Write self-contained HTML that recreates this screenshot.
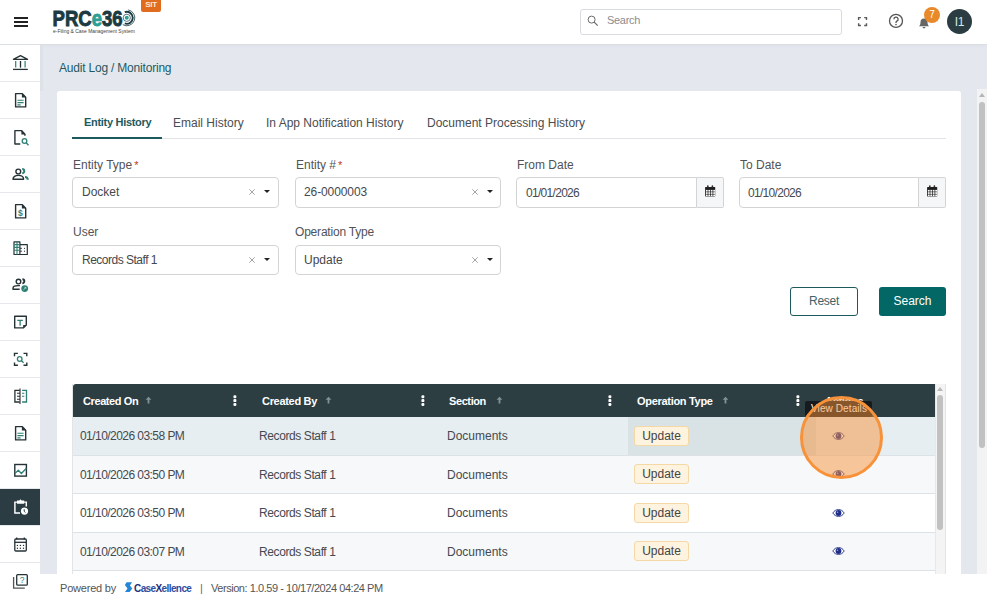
<!DOCTYPE html>
<html><head><meta charset="utf-8">
<style>
*{box-sizing:border-box;margin:0;padding:0}
html,body{width:987px;height:599px;overflow:hidden}
body{position:relative;background:#e4e8ee;font-family:"Liberation Sans",sans-serif;color:#3a3f44;font-size:12px}
.abs{position:absolute}
.t{position:absolute;white-space:nowrap;line-height:1}
/* header */
#hdr{left:0;top:0;width:987px;height:45px;background:#fff;border-bottom:1px solid #dcdfe2;box-shadow:0 1px 3px rgba(0,0,0,.03)}
#side{left:0;top:45px;width:40px;height:554px;background:#fff}
.sitem{position:absolute;left:0;width:40px;height:37px;border-bottom:1px solid #e3e6ea}
.sitem svg{position:absolute;left:12px;top:10px}
#card{left:57px;top:91px;width:904px;height:500px;background:#fff;border-radius:3px}
#footer{left:40px;top:574px;width:947px;height:25px;background:#fff}
.lbl{font-size:12px;color:#505357}
.sel{position:absolute;height:31px;border:1px solid #d4d4d4;border-radius:4px;background:#fff}
.sel .v{position:absolute;left:9px;top:8px;font-size:12px;color:#45484c;white-space:nowrap;line-height:12px}
.sel .x{position:absolute;top:11px;width:6px;height:6px}
.sel .ar{position:absolute;top:12px;width:0;height:0;border-left:3px solid transparent;border-right:3px solid transparent;border-top:3px solid #222}
.inp{position:absolute;height:31px;border:1px solid #d4d4d4;border-radius:4px 0 0 4px;background:#fff}
.addon{position:absolute;height:31px;border:1px solid #d4d4d4;border-left:none;border-radius:0 2px 2px 0;background:#f5f6f8}
.th{position:absolute;top:396px;font-size:11px;font-weight:bold;color:#fff;white-space:nowrap;line-height:11px}
.kb{position:absolute;top:395px;width:3px;height:11px}
.kb i{position:absolute;left:0;width:3px;height:3px;border-radius:50%;background:#fff}
.row{position:absolute;left:73px;width:862px;border-bottom:1px solid #dde2e6}
.td{position:absolute;font-size:12px;color:#454950;white-space:nowrap;line-height:12px}
.badge{position:absolute;left:634px;width:55px;height:20px;background:#fdf3de;border:1px solid #f4d9a6;border-radius:3px;font-size:12px;color:#444;text-align:center;line-height:18px}
</style></head><body>

<div id="hdr" class="abs"></div>
<!-- hamburger -->
<div class="abs" style="left:14px;top:17px;width:14px;height:2px;background:#222"></div>
<div class="abs" style="left:14px;top:21px;width:14px;height:2px;background:#222"></div>
<div class="abs" style="left:14px;top:25px;width:14px;height:2px;background:#222"></div>

<!-- logo -->
<svg class="abs" style="left:50px;top:4px" width="90" height="32" viewBox="0 0 90 32">
<text x="2.6" y="21.8" font-family="Liberation Sans" font-weight="bold" font-size="22" fill="#1b3a42" stroke="#1b3a42" stroke-width=".9" textLength="70" lengthAdjust="spacingAndGlyphs">PRC<tspan fill="#2d9f94" stroke="#2d9f94">e</tspan>36</text>
<text x="3" y="28.6" font-family="Liberation Sans" font-size="5" fill="#3a3f44" textLength="81.8" lengthAdjust="spacingAndGlyphs">e-Filing &amp; Case Management System</text>
<path d="M74.75 8.16A6 6 0 1 1 74.75 19.44" stroke="#1b3a42" stroke-width="1.9" fill="none"/>
<path d="M78.2 5.9A8 8 0 1 1 72.8 20.7" stroke="#1b3a42" stroke-width=".8" fill="none"/>
<circle cx="76.8" cy="13.8" r="3.6" stroke="#1b3a42" stroke-width=".7" fill="none"/>
<circle cx="76.8" cy="13.8" r="2" fill="#2d9f94"/>
</svg>
<div class="abs" style="left:141px;top:0;width:20px;height:12px;background:#e06d1f;border-radius:0 0 2px 2px;color:#ffe9cf;font-size:8px;font-weight:bold;text-align:center;line-height:10px;letter-spacing:-.3px">SIT</div>
<!-- search -->
<div class="abs" style="left:580px;top:9px;width:262px;height:26px;border:1px solid #d8dbe0;border-radius:3px;background:#fff"></div>
<div class="t" style="left:607px;top:15px;font-size:11px;color:#8a8d91;letter-spacing:-.3px">Search</div>

<svg class="abs" style="left:587px;top:15px" width="12" height="12" viewBox="0 0 12 12" fill="none"><circle cx="4.6" cy="4.6" r="3.5" stroke="#6a6a6a" stroke-width="1"/><path d="M7.2 7.2l3.5 3.5" stroke="#6a6a6a" stroke-width="1.2"/></svg>
<svg class="abs" style="left:857px;top:16px" width="11" height="11" viewBox="0 0 11 11" fill="none" stroke="#5a5a5a" stroke-width="1.4"><path d="M1.6 3.9V1.6h2.3M7.2 1.6h2.3v2.3M9.5 7.2v2.3H7.2M3.9 9.5H1.6V7.2"/></svg>
<svg class="abs" style="left:888px;top:13px" width="16" height="16" viewBox="0 0 16 16" fill="none"><circle cx="8" cy="7.9" r="6.5" stroke="#555" stroke-width="1.3"/><path d="M5.9 6.2a2.1 2.1 0 1 1 3 1.9c-.6.3-.9.7-.9 1.4v.6" stroke="#555" stroke-width="1.3"/><circle cx="8" cy="11.6" r=".8" fill="#555"/></svg>
<svg class="abs" style="left:917px;top:15px" width="14" height="14" viewBox="0 0 14 14"><path d="M2 11.2c1-1 1.5-2 1.5-4.2A3.5 3.5 0 0 1 7 3.5a3.5 3.5 0 0 1 3.5 3.5c0 2.2.5 3.2 1.5 4.2z" fill="#666"/><rect x="5.6" y="12" width="2.8" height="1.2" rx=".6" fill="#666"/></svg>
<div class="abs" style="left:924px;top:7px;width:16px;height:16px;border-radius:50%;background:#e8892a;color:#fff;font-size:10px;text-align:center;line-height:15px">7</div>
<div class="abs" style="left:947px;top:9px;width:25px;height:25px;border-radius:50%;background:#2b3d42;color:#d5ebe5;font-size:12px;text-align:center;line-height:26px;letter-spacing:-.3px">I1</div>
<div id="side" class="abs"></div>
<div class="abs" style="left:0;top:81px;width:40px;height:1px;background:#e6e8eb"></div>
<div class="abs" style="left:0;top:118px;width:40px;height:1px;background:#e6e8eb"></div>
<div class="abs" style="left:0;top:155px;width:40px;height:1px;background:#e6e8eb"></div>
<div class="abs" style="left:0;top:192px;width:40px;height:1px;background:#e6e8eb"></div>
<div class="abs" style="left:0;top:229px;width:40px;height:1px;background:#e6e8eb"></div>
<div class="abs" style="left:0;top:266px;width:40px;height:1px;background:#e6e8eb"></div>
<div class="abs" style="left:0;top:303px;width:40px;height:1px;background:#e6e8eb"></div>
<div class="abs" style="left:0;top:340px;width:40px;height:1px;background:#e6e8eb"></div>
<div class="abs" style="left:0;top:377px;width:40px;height:1px;background:#e6e8eb"></div>
<div class="abs" style="left:0;top:414px;width:40px;height:1px;background:#e6e8eb"></div>
<div class="abs" style="left:0;top:451px;width:40px;height:1px;background:#e6e8eb"></div>
<div class="abs" style="left:0;top:488px;width:40px;height:1px;background:#e6e8eb"></div>
<div class="abs" style="left:0;top:525px;width:40px;height:1px;background:#e6e8eb"></div>
<div class="abs" style="left:0;top:562px;width:40px;height:1px;background:#e6e8eb"></div>
<div class="abs" style="left:0;top:489px;width:40px;height:36px;background:#2b3d42"></div>
<svg class="abs" style="left:8px;top:50px" width="25" height="25" viewBox="0 0 25 25" fill="none" stroke-linecap="butt"><path d="M5.4 9.3 L12.5 5.6 L19.6 9.3 Z" stroke="#263236" stroke-width="1.3" stroke-linejoin="round"/><path d="M7.7 11v6.5M12.5 11v6.5M17.1 11v6.5" stroke="#2f7f74" stroke-width="1.2"/><path d="M12.5 11v6.5" stroke="#263236" stroke-width="1.2"/><path d="M5 19.4h14.8" stroke="#263236" stroke-width="1.3"/></svg>
<svg class="abs" style="left:8px;top:87px" width="25" height="25" viewBox="0 0 25 25" fill="none" stroke-linecap="butt"><path d="M7.6 6.6h6.5l3.6 3.6v9.7h-10.1z" stroke="#263236" stroke-width="1.4" stroke-linejoin="round"/><path d="M13.9 6.2v4.4h4.2z" fill="#263236"/><path d="M9.4 13.3h6.2M9.4 15.6h6.2" stroke="#2f7f74" stroke-width="1.1"/><path d="M9.4 17.9h3.2" stroke="#2f7f74" stroke-width="1.5" opacity=".85"/></svg>
<svg class="abs" style="left:8px;top:124px" width="25" height="25" viewBox="0 0 25 25" fill="none" stroke-linecap="butt"><path d="M12.3 20h-5.4v-13.4h6.6l3.4 3.6v1.5" stroke="#263236" stroke-width="1.4" stroke-linejoin="round"/><path d="M13.4 6.3v4.3h4.2z" fill="#263236"/><circle cx="16.5" cy="17" r="2.3" stroke="#2f7f74" stroke-width="1.3"/><path d="M18.2 18.8l2.3 2.4" stroke="#2f7f74" stroke-width="1.3"/></svg>
<svg class="abs" style="left:8px;top:161px" width="25" height="25" viewBox="0 0 25 25" fill="none" stroke-linecap="butt"><circle cx="10.3" cy="10.5" r="2.4" stroke="#263236" stroke-width="1.4"/><path d="M5 18.2c0-2.4 2.4-3.8 5.3-3.8s5.3 1.4 5.3 3.8z" stroke="#263236" stroke-width="1.4" stroke-linejoin="round"/><path d="M14.2 8.1A2 2 0 0 1 14.2 12.2" stroke="#2f7f74" stroke-width="2"/><path d="M17 15A3.8 3.8 0 0 1 20.8 18.8H18.7A1.7 1.7 0 0 0 17 17.1Z" fill="#2f7f74"/></svg>
<svg class="abs" style="left:8px;top:198px" width="25" height="25" viewBox="0 0 25 25" fill="none" stroke-linecap="butt"><path d="M7.6 6.6h6.5l3.6 3.6v9.7h-10.1z" stroke="#263236" stroke-width="1.4" stroke-linejoin="round"/><path d="M13.9 6.2v4.4h4.2z" fill="#263236"/><text x="12.4" y="17.8" font-family="Liberation Sans" font-size="8.5" font-weight="bold" fill="#2f7f74" text-anchor="middle">$</text></svg>
<svg class="abs" style="left:8px;top:235px" width="25" height="25" viewBox="0 0 25 25" fill="none" stroke-linecap="butt"><path d="M6 19.5V6.8h5.9v12.7zM11.9 19.5V9.7h7.4v9.8z" stroke="#263236" stroke-width="1.2" stroke-linejoin="round"/><path d="M6 9.6h5.9M6 12.4h5.9M6 15.2h5.9M9 6.8v12.7" stroke="#2f7f74" stroke-width="1.1"/><path d="M11.9 13.3h2M11.9 16.2h2" stroke="#263236" stroke-width="1"/><circle cx="16.5" cy="13.3" r=".6" fill="#263236"/><circle cx="16.5" cy="16.2" r=".6" fill="#263236"/></svg>
<svg class="abs" style="left:8px;top:272px" width="25" height="25" viewBox="0 0 25 25" fill="none" stroke-linecap="butt"><circle cx="10.5" cy="9.6" r="2.3" stroke="#263236" stroke-width="1.4"/><path d="M12 13.6h-2c-3 0-5 1-5 2.6v1.1h6.7" stroke="#263236" stroke-width="1.4" stroke-linejoin="round"/><path d="M14.4 7.3A1.9 1.9 0 0 1 14.4 11.2" stroke="#263236" stroke-width="1.9"/><circle cx="16.7" cy="16.6" r="3.4" fill="#2f7f74"/><path d="M15.4 17.9l2.4-2.4M16.5 15.4h1.4v1.4" stroke="#bfe9e2" stroke-width=".8"/></svg>
<svg class="abs" style="left:8px;top:309px" width="25" height="25" viewBox="0 0 25 25" fill="none" stroke-linecap="butt"><path d="M6.7 7.3h11.6v8.6l-3 3h-8.6z" stroke="#263236" stroke-width="1.4" stroke-linejoin="round"/><path d="M15.2 18.9v-3h3z" fill="#263236"/><path d="M9.3 11.3h5.6M12.1 11.3v5.4" stroke="#2f7f74" stroke-width="1.3"/></svg>
<svg class="abs" style="left:8px;top:346px" width="25" height="25" viewBox="0 0 25 25" fill="none" stroke-linecap="butt"><path d="M6.5 10.3V7.4h3.4M15.5 7.4h3.3v2.9M18.8 16.4v2.9h-3.3M9.9 19.3H6.5v-2.9" stroke="#263236" stroke-width="1.4"/><circle cx="11.7" cy="13" r="2.3" stroke="#2f7f74" stroke-width="1.3"/><path d="M13.4 14.7l2.2 2.1" stroke="#2f7f74" stroke-width="1.3"/></svg>
<svg class="abs" style="left:8px;top:383px" width="25" height="25" viewBox="0 0 25 25" fill="none" stroke-linecap="butt"><path d="M12 7.4H6.9v11.6H12" stroke="#263236" stroke-width="1.3"/><path d="M12 5.4v15.6" stroke="#555" stroke-width="1.4"/><path d="M14.1 7.4h4.4v11.6h-4.4" stroke="#2f7f74" stroke-width="1.3"/><path d="M9 10.3h3M9 13.3h3M9 16.3h3" stroke="#263236" stroke-width="1.1"/><path d="M14 10.3h2.3M14 13.3h2.3" stroke="#2f7f74" stroke-width="1.1"/></svg>
<svg class="abs" style="left:8px;top:420px" width="25" height="25" viewBox="0 0 25 25" fill="none" stroke-linecap="butt"><path d="M7.6 6.6h6.5l3.6 3.6v9.7h-10.1z" stroke="#263236" stroke-width="1.4" stroke-linejoin="round"/><path d="M13.9 6.2v4.4h4.2z" fill="#263236"/><path d="M9.4 13.3h6.2M9.4 15.6h6.2" stroke="#2f7f74" stroke-width="1.1"/><path d="M9.4 17.9h3.2" stroke="#2f7f74" stroke-width="1.5" opacity=".85"/></svg>
<svg class="abs" style="left:8px;top:457px" width="25" height="25" viewBox="0 0 25 25" fill="none" stroke-linecap="butt"><rect x="6.8" y="7.5" width="11.6" height="11.6" stroke="#263236" stroke-width="1.4"/><path d="M7 16.4l3.3-3.1 3.1 3.2 5-5.3" stroke="#2f7f74" stroke-width="1.3" stroke-linejoin="round"/></svg>
<svg class="abs" style="left:8px;top:494px" width="25" height="25" viewBox="0 0 25 25" fill="none" stroke-linecap="butt"><path d="M12 18.9H6.9V8.1h2.3M15.9 8.1h2.4v4.4" stroke="#ffffff" stroke-width="1.45"/><path d="M9 9.8V6.4h2.4l1.1-1.2 1.1 1.2h2.6v3.4z" fill="#ffffff"/><circle cx="16.5" cy="17.1" r="3.6" fill="#ffffff"/><path d="M16.2 15.2v2.1l1.3 1.3" stroke="#2b3d42" stroke-width="1"/></svg>
<svg class="abs" style="left:8px;top:531px" width="25" height="25" viewBox="0 0 25 25" fill="none" stroke-linecap="butt"><rect x="6.8" y="8" width="11.5" height="12" rx="1" stroke="#263236" stroke-width="1.3"/><path d="M6.8 11.3h11.5" stroke="#263236" stroke-width="1.3"/><path d="M8.7 6.4v2M16.3 6.4v2" stroke="#263236" stroke-width="1.3"/><g fill="#263236"><circle cx="9.4" cy="14.4" r=".7"/><circle cx="12.4" cy="14.4" r=".7"/><circle cx="15.5" cy="14.4" r=".7"/><circle cx="9.4" cy="17.3" r=".7"/><circle cx="12.4" cy="17.3" r=".7"/><circle cx="15.5" cy="17.3" r=".7"/></g></svg>
<svg class="abs" style="left:8px;top:568px" width="25" height="25" viewBox="0 0 25 25" fill="none" stroke-linecap="butt"><rect x="8.7" y="6.6" width="10.6" height="10.6" rx="1" stroke="#263236" stroke-width="1.3"/><path d="M5.6 9.1v11.1h11.2" stroke="#555" stroke-width="1.3"/><text x="14" y="14.8" font-family="Liberation Sans" font-size="8.5" fill="#2f7f74" text-anchor="middle">?</text></svg>
<div class="abs" style="left:40px;top:45px;width:3px;height:46px;background:#dde2e8"></div>

<div class="t" style="left:59px;top:62px;font-size:12px;color:#1f5a63;letter-spacing:-0.2px">Audit Log / Monitoring</div>

<div id="card" class="abs"></div>
<div class="abs" style="left:977px;top:89px;width:10px;height:485px;background:#f3f3f3"></div>
<div class="abs" style="left:979px;top:93px;width:0;height:0;border-left:3px solid transparent;border-right:3px solid transparent;border-bottom:4px solid #b5b5b5"></div>
<div class="abs" style="left:979px;top:102px;width:6px;height:346px;border-radius:3px;background:#c1c1c1"></div>


<!-- tabs -->
<div class="abs" style="left:72px;top:138px;width:874px;height:1px;background:#e2e4e7"></div>
<div class="abs" style="left:72px;top:137px;width:90px;height:2px;background:#1e5a5c"></div>
<div class="t" style="left:84px;top:117px;font-size:11px;font-weight:bold;color:#1e5a5c;letter-spacing:-0.3px">Entity History</div>
<div class="t" style="left:173px;top:117px;font-size:12px;color:#4a4d51">Email History</div>
<div class="t" style="left:266px;top:117px;font-size:12px;color:#4a4d51">In App Notification History</div>
<div class="t" style="left:427px;top:117px;font-size:12px;color:#4a4d51">Document Processing History</div>

<!-- form row 1 -->
<div class="t lbl" style="left:73px;top:159px">Entity Type<span style="color:#c0392b;margin-left:2px;font-size:11px">*</span></div>
<div class="t lbl" style="left:296px;top:159px">Entity #<span style="color:#c0392b;margin-left:2px;font-size:11px">*</span></div>
<div class="t lbl" style="left:517px;top:159px">From Date</div>
<div class="t lbl" style="left:740px;top:159px">To Date</div>

<div class="sel" style="left:72px;top:177px;width:207px"><span class="v">Docket</span><span class="x" style="left:176px"><svg width="6" height="6" viewBox="0 0 6 6" style="display:block"><path d="M.3 .3L5.7 5.7M5.7 .3L.3 5.7" stroke="#9a9a9a" stroke-width=".9"/></svg></span><span class="ar" style="left:191px"></span></div>
<div class="sel" style="left:295px;top:177px;width:206px"><span class="v" style="left:8px;letter-spacing:-.1px">26-0000003</span><span class="x" style="left:176px"><svg width="6" height="6" viewBox="0 0 6 6" style="display:block"><path d="M.3 .3L5.7 5.7M5.7 .3L.3 5.7" stroke="#9a9a9a" stroke-width=".9"/></svg></span><span class="ar" style="left:191px"></span></div>
<div class="inp" style="left:516px;top:177px;width:181px"><span class="td" style="left:9px;top:9px;letter-spacing:-.7px">01/01/2026</span></div>
<div class="addon" style="left:697px;top:177px;width:27px"></div>
<div class="inp" style="left:739px;top:177px;width:180px"><span class="td" style="left:8px;top:9px;letter-spacing:-.7px">01/10/2026</span></div>
<div class="addon" style="left:919px;top:177px;width:27px"></div>

<svg class="abs" style="left:705px;top:185px" width="11" height="12" viewBox="0 0 11 12"><rect x=".1" y="1.9" width="10.1" height="9.5" rx=".6" fill="#1e1e1e"/><rect x="2" y=".2" width="1.6" height="2.6" rx=".7" fill="#333"/><rect x="6.6" y=".2" width="1.6" height="2.6" rx=".7" fill="#333"/><g fill="#fff"><rect x="0.9" y="4.9" width="1.75" height="1.7"/><rect x="3.35" y="4.9" width="1.75" height="1.7"/><rect x="5.8" y="4.9" width="1.75" height="1.7"/><rect x="8.25" y="4.9" width="1.75" height="1.7"/><rect x="0.9" y="7.2" width="1.75" height="1.7"/><rect x="3.35" y="7.2" width="1.75" height="1.7"/><rect x="5.8" y="7.2" width="1.75" height="1.7"/><rect x="8.25" y="7.2" width="1.75" height="1.7"/><rect x="0.9" y="9.5" width="1.75" height="1.7"/><rect x="3.35" y="9.5" width="1.75" height="1.7"/><rect x="5.8" y="9.5" width="1.75" height="1.7"/><rect x="8.25" y="9.5" width="1.75" height="1.7"/></g></svg>
<svg class="abs" style="left:927px;top:185px" width="11" height="12" viewBox="0 0 11 12"><rect x=".1" y="1.9" width="10.1" height="9.5" rx=".6" fill="#1e1e1e"/><rect x="2" y=".2" width="1.6" height="2.6" rx=".7" fill="#333"/><rect x="6.6" y=".2" width="1.6" height="2.6" rx=".7" fill="#333"/><g fill="#fff"><rect x="0.9" y="4.9" width="1.75" height="1.7"/><rect x="3.35" y="4.9" width="1.75" height="1.7"/><rect x="5.8" y="4.9" width="1.75" height="1.7"/><rect x="8.25" y="4.9" width="1.75" height="1.7"/><rect x="0.9" y="7.2" width="1.75" height="1.7"/><rect x="3.35" y="7.2" width="1.75" height="1.7"/><rect x="5.8" y="7.2" width="1.75" height="1.7"/><rect x="8.25" y="7.2" width="1.75" height="1.7"/><rect x="0.9" y="9.5" width="1.75" height="1.7"/><rect x="3.35" y="9.5" width="1.75" height="1.7"/><rect x="5.8" y="9.5" width="1.75" height="1.7"/><rect x="8.25" y="9.5" width="1.75" height="1.7"/></g></svg>
<!-- form row 2 -->
<div class="t lbl" style="left:73px;top:226px">User</div>
<div class="t lbl" style="left:295px;top:226px;letter-spacing:-.2px">Operation Type</div>
<div class="sel" style="left:72px;top:245px;width:207px;height:30px"><span class="v" style="top:8px;letter-spacing:-.5px">Records Staff 1</span><span class="x" style="left:176px"><svg width="6" height="6" viewBox="0 0 6 6" style="display:block"><path d="M.3 .3L5.7 5.7M5.7 .3L.3 5.7" stroke="#9a9a9a" stroke-width=".9"/></svg></span><span class="ar" style="left:191px"></span></div>
<div class="sel" style="left:295px;top:245px;width:206px;height:30px"><span class="v" style="left:8px;top:8px">Update</span><span class="x" style="left:176px"><svg width="6" height="6" viewBox="0 0 6 6" style="display:block"><path d="M.3 .3L5.7 5.7M5.7 .3L.3 5.7" stroke="#9a9a9a" stroke-width=".9"/></svg></span><span class="ar" style="left:191px"></span></div>

<!-- buttons -->
<div class="abs" style="left:790px;top:287px;width:68px;height:29px;border:1px solid #1e5a5c;border-radius:3px;background:#fff;color:#3e6366;font-size:12px;text-align:center;line-height:27px;letter-spacing:-.3px">Reset</div>
<div class="abs" style="left:879px;top:287px;width:67px;height:29px;border-radius:3px;background:#036766;color:#fff;font-size:12px;text-align:center;line-height:29px">Search</div>

<!-- table -->
<div class="abs" style="left:72px;top:384px;width:874px;height:200px;border:1px solid #e2e4e6;border-top:none;background:#fff"></div>
<div class="abs" style="left:73px;top:384px;width:862px;height:33px;background:#2d3e43;border-radius:3px 0 0 0"></div>
<div class="th" style="left:83px;letter-spacing:-.4px">Created On</div>
<div class="th" style="left:262px;letter-spacing:-.3px">Created By</div>
<div class="th" style="left:449px;letter-spacing:-.4px">Section</div>
<div class="th" style="left:637px;letter-spacing:-.3px">Operation Type</div>

<div class="row" style="top:417px;height:39px;background:#e7eef1"></div>
<div class="abs" style="left:628px;top:417px;width:188px;height:38px;background:#d9e2e5"></div>
<div class="row" style="top:456px;height:38px;background:#f6f8fa"></div>
<div class="row" style="top:494px;height:39px;background:#fff"></div>
<div class="row" style="top:533px;height:38px;background:#f6f8fa"></div>

<div class="td" style="left:80px;top:430px;letter-spacing:-.55px">01/10/2026 03:58 PM</div>
<div class="td" style="left:259px;top:430px;letter-spacing:-.4px">Records Staff 1</div>
<div class="td" style="left:447px;top:430px">Documents</div>
<div class="badge" style="top:426px">Update</div>

<div class="td" style="left:80px;top:469px;letter-spacing:-.55px">01/10/2026 03:50 PM</div>
<div class="td" style="left:259px;top:469px;letter-spacing:-.4px">Records Staff 1</div>
<div class="td" style="left:447px;top:469px">Documents</div>
<div class="badge" style="top:464px">Update</div>

<div class="td" style="left:80px;top:507px;letter-spacing:-.55px">01/10/2026 03:50 PM</div>
<div class="td" style="left:259px;top:507px;letter-spacing:-.4px">Records Staff 1</div>
<div class="td" style="left:447px;top:507px">Documents</div>
<div class="badge" style="top:503px">Update</div>

<div class="td" style="left:80px;top:546px;letter-spacing:-.55px">01/10/2026 03:07 PM</div>
<div class="td" style="left:259px;top:546px;letter-spacing:-.4px">Records Staff 1</div>
<div class="td" style="left:447px;top:546px">Documents</div>
<div class="badge" style="top:541px">Update</div>

<svg class="abs" style="left:145px;top:396px" width="7" height="8" viewBox="0 0 7 8"><path d="M3.5 .8L6.4 3.8H4.4V7.4H2.6V3.8H.6z" fill="#7f9398"/></svg>
<svg class="abs" style="left:325px;top:396px" width="7" height="8" viewBox="0 0 7 8"><path d="M3.5 .8L6.4 3.8H4.4V7.4H2.6V3.8H.6z" fill="#7f9398"/></svg>
<svg class="abs" style="left:496px;top:396px" width="7" height="8" viewBox="0 0 7 8"><path d="M3.5 .8L6.4 3.8H4.4V7.4H2.6V3.8H.6z" fill="#7f9398"/></svg>
<svg class="abs" style="left:722px;top:396px" width="7" height="8" viewBox="0 0 7 8"><path d="M3.5 .8L6.4 3.8H4.4V7.4H2.6V3.8H.6z" fill="#7f9398"/></svg>
<svg class="abs" style="left:233px;top:394px" width="4" height="13" viewBox="0 0 4 13" fill="#fff"><rect x=".4" y="1.3" width="3" height="3" rx="1.2"/><rect x=".4" y="5.1" width="3" height="3" rx="1.2"/><rect x=".4" y="8.9" width="3" height="3" rx="1.2"/></svg>
<svg class="abs" style="left:421px;top:394px" width="4" height="13" viewBox="0 0 4 13" fill="#fff"><rect x=".4" y="1.3" width="3" height="3" rx="1.2"/><rect x=".4" y="5.1" width="3" height="3" rx="1.2"/><rect x=".4" y="8.9" width="3" height="3" rx="1.2"/></svg>
<svg class="abs" style="left:608px;top:394px" width="4" height="13" viewBox="0 0 4 13" fill="#fff"><rect x=".4" y="1.3" width="3" height="3" rx="1.2"/><rect x=".4" y="5.1" width="3" height="3" rx="1.2"/><rect x=".4" y="8.9" width="3" height="3" rx="1.2"/></svg>
<svg class="abs" style="left:796px;top:394px" width="4" height="13" viewBox="0 0 4 13" fill="#fff"><rect x=".4" y="1.3" width="3" height="3" rx="1.2"/><rect x=".4" y="5.1" width="3" height="3" rx="1.2"/><rect x=".4" y="8.9" width="3" height="3" rx="1.2"/></svg>
<div class="th" style="left:825px;letter-spacing:-.3px">Actions</div>
<svg class="abs" style="left:832px;top:432px" width="13" height="8" viewBox="0 0 13 8"><path d="M.8 4C2.3 1.6 4.2.6 6.5.6S10.7 1.6 12.2 4C10.7 6.4 8.8 7.4 6.5 7.4S2.3 6.4.8 4z" fill="#fff" stroke="#1f2d86" stroke-width=".9"/><circle cx="6.5" cy="4" r="2.9" fill="#1f2d86"/><circle cx="5.6" cy="3.2" r=".8" fill="#8fa0e0"/></svg>
<svg class="abs" style="left:832px;top:470px" width="13" height="8" viewBox="0 0 13 8"><path d="M.8 4C2.3 1.6 4.2.6 6.5.6S10.7 1.6 12.2 4C10.7 6.4 8.8 7.4 6.5 7.4S2.3 6.4.8 4z" fill="#fff" stroke="#1f2d86" stroke-width=".9"/><circle cx="6.5" cy="4" r="2.9" fill="#1f2d86"/><circle cx="5.6" cy="3.2" r=".8" fill="#8fa0e0"/></svg>
<svg class="abs" style="left:832px;top:509px" width="13" height="8" viewBox="0 0 13 8"><path d="M.8 4C2.3 1.6 4.2.6 6.5.6S10.7 1.6 12.2 4C10.7 6.4 8.8 7.4 6.5 7.4S2.3 6.4.8 4z" fill="#fff" stroke="#1f2d86" stroke-width=".9"/><circle cx="6.5" cy="4" r="2.9" fill="#1f2d86"/><circle cx="5.6" cy="3.2" r=".8" fill="#8fa0e0"/></svg>
<svg class="abs" style="left:832px;top:547px" width="13" height="8" viewBox="0 0 13 8"><path d="M.8 4C2.3 1.6 4.2.6 6.5.6S10.7 1.6 12.2 4C10.7 6.4 8.8 7.4 6.5 7.4S2.3 6.4.8 4z" fill="#fff" stroke="#1f2d86" stroke-width=".9"/><circle cx="6.5" cy="4" r="2.9" fill="#1f2d86"/><circle cx="5.6" cy="3.2" r=".8" fill="#8fa0e0"/></svg>
<div class="abs" style="left:935px;top:384px;width:10px;height:199px;background:#f4f4f4;border-left:1px solid #e8e8e8"></div>
<div class="abs" style="left:937px;top:387px;width:0;height:0;border-left:3px solid transparent;border-right:3px solid transparent;border-bottom:4px solid #b8b8b8"></div>
<div class="abs" style="left:937px;top:395px;width:6px;height:135px;border-radius:3px;background:#c1c1c1"></div>
<div id="footer" class="abs"></div>
<div class="t" style="left:60px;top:583px;font-size:11px;color:#555;letter-spacing:-.2px">Powered by</div>
<div class="t" style="left:134px;top:584px;font-size:10px;font-weight:bold;color:#2f4da0;letter-spacing:-.6px"><span style="color:#1e2f7a">C</span>ase<span style="color:#1e2f7a">X</span>ellence</div>
<div class="t" style="left:200px;top:583px;font-size:11px;color:#666">|</div>
<div class="t" style="left:211px;top:583px;font-size:11px;color:#555;letter-spacing:-.45px">Version: 1.0.59 - 10/17/2024 04:24 PM</div>

<svg class="abs" style="left:124px;top:582px" width="9" height="11" viewBox="0 0 9 11"><path d="M2.6 .3L8.1 .3L5.9 3.5L8.3 6.4L5.6 10.1L1 10.1L3.5 6.6L.9 3z" fill="#2585d6"/></svg>
<div class="abs" style="left:805px;top:401px;width:67px;height:16px;background:#161b1d;border-radius:2px"></div>
<div class="t" style="left:811px;top:404px;font-size:10px;color:#fff;letter-spacing:.1px">View Details</div>
<div class="abs" style="left:800px;top:396px;width:83px;height:83px;border-radius:50%;border:3.5px solid #f7923a;background:rgba(247,146,58,.5)"></div>
</body></html>
